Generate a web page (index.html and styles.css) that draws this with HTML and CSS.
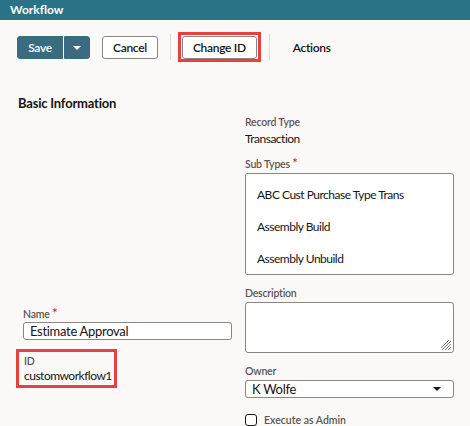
FILE: index.html
```html
<!doctype html>
<html lang="en-US">
<head>
<meta name="viewport" content="width=device-width" />
<meta charset="utf-8" />
<title>Workflow</title>
<link rel="stylesheet" href="styles.css">
</head>
<body>
<div class="header">Workflow</div>

<!-- toolbar: save split button, cancel, change id, actions menu -->
<div class="toolbar">
	<div class="split">
		<button class="btn primary">Save</button>
		<button class="btn primary drop"><span class="caret"></span></button>
	</div>
	<button class="btn">Cancel</button>
	<span class="sep"></span>
	<span class="mark">
		<button class="btn">Change ID</button>
	</span>
	<span class="sep second"></span>
	<button class="btn plain">Actions</button>
</div>

<div class="form">
	<div class="col left">
		<h2>Basic Information</h2>

		<div class="field name">
			<label>Name <span class="req">*</span></label>
			<div class="input">Estimate Approval</div>
		</div>

		<div class="mark idbox">
			<label>ID</label>
			<div class="value">customworkflow1</div>
		</div>
	</div>

	<div class="col right">
		<div class="field">
			<label>Record Type</label>
			<div class="value">Transaction</div>
		</div>

		<div class="field">
			<label>Sub Types <span class="req">*</span></label>
			<ul class="listbox">
				<li>ABC Cust Purchase Type Trans</li>
				<li>Assembly Build</li>
				<li>Assembly Unbuild</li>
			</ul>
		</div>

		<div class="field">
			<label>Description</label>
			<div class="textarea">
				<svg class="grip" width="10" height="10" viewBox="0 0 10 10">
					<path d="M10 1L1 10M10 4L4 10M10 7L7 10M10 -2L-2 10" stroke="#777" stroke-width="1" />
				</svg>
			</div>
		</div>

		<div class="field">
			<label>Owner</label>
			<div class="input select">K Wolfe <span class="caret dark"></span></div>
		</div>

		<div class="check">
			<span class="box"></span>
			<span>Execute as Admin</span>
		</div>
	</div>
</div>
</body>
</html>
```

FILE: styles.css
```css
body {
	margin: 0;
	background-color: #faf9f8;
	color: #161513;
	font-family: Lato, "Noto Sans", sans-serif;
	font-size: 13px;
	overflow: hidden;
}
.header {
	background-color: #2a7386;
	color: #ffffff;
	font-weight: bold;
	font-size: 12px;
	height: 20px;
	line-height: 19px;
	padding-left: 10px;
}
.toolbar {
	display: flex;
	align-items: center;
	padding: 12px 0 0 17px;
	height: 30px;
}
.split {
	display: flex;
	gap: 1px;
	margin-right: 12px;
}
.btn {
	font-family: inherit;
	font-size: 12px;
	font-weight: 600;
	letter-spacing: -0.3px;
	color: #161513;
	background-color: #ffffff;
	border: 1px solid #8a8680;
	border-radius: 3px;
	height: 23px;
	padding: 0 10px;
}
.btn.primary {
	background-color: #3a6b7e;
	border-color: #3a6b7e;
	color: #ffffff;
	width: 46px;
	padding: 0;
	border-radius: 3px 0 0 3px;
}
.btn.drop {
	width: 26px;
	border-radius: 0 3px 3px 0;
}
.caret {
	display: inline-block;
	border-left: 4px solid transparent;
	border-right: 4px solid transparent;
	border-top: 4px solid #ffffff;
	vertical-align: middle;
}
.caret.dark {
	border-top-color: #161513;
	margin-left: auto;
}
.sep {
	width: 1px;
	height: 26px;
	background-color: #dedbd7;
	margin: 0 7px 0 12px;
}
.sep.second {
	margin-left: 8px;
}
.mark {
	border: 3px solid #e8403f;
	padding: 0 1px;
	display: inline-block;
}
.toolbar .mark {
	height: 24px;
	display: flex;
	align-items: center;
}
.btn.plain {
	border-color: transparent;
	background: none;
	margin-left: 5px;
}
.form {
	display: grid;
	grid-template-columns: 216px 209px;
	column-gap: 13px;
	padding-left: 16px;
	margin-top: 19px;
}
.col {
	display: flex;
	flex-direction: column;
}
h2 {
	font-size: 13px;
	font-weight: bold;
	letter-spacing: -0.2px;
	margin: 14px 0 0 2px;
}
label {
	display: block;
	font-size: 10.5px;
	color: #5b5652;
	font-weight: 600;
	letter-spacing: -0.2px;
	margin-bottom: 3px;
}
.req {
	color: #c0362c;
	font-size: 13px;
	line-height: 8px;
}
.value {
	font-size: 12px;
	letter-spacing: -0.5px;
}
.right .field {
	margin-bottom: 12px;
}
.right .field:first-child {
	margin-top: 35px;
}
.input {
	height: 16px;
	line-height: 16px;
	background-color: #ffffff;
	border: 1px solid #8a8680;
	border-radius: 3px;
	padding: 0 6px;
	font-size: 13px;
	letter-spacing: -0.3px;
}
.select {
	display: flex;
	align-items: center;
	padding-right: 12px;
}
.listbox {
	list-style-type: none;
	margin: 0;
	padding: 13px 0 0 11px;
	height: 87px;
	overflow: hidden;
	background-color: #ffffff;
	border: 1px solid #8a8680;
	border-radius: 3px;
	font-size: 12px;
	letter-spacing: -0.5px;
}
.listbox li {
	height: 32px;
}
.textarea {
	position: relative;
	height: 49px;
	background-color: #ffffff;
	border: 1px solid #8a8680;
	border-radius: 3px;
}
.grip {
	position: absolute;
	right: 2px;
	bottom: 2px;
}
.left .name {
	margin-top: 197px;
	margin-left: 7px;
}
.left .name label {
	margin-bottom: 2px;
}
.idbox {
	margin-top: 9px;
	width: 90px;
	padding: 3px 0 2px 5px;
	align-self: flex-start;
}
.idbox label {
	margin-bottom: 1px;
}
.check {
	display: flex;
	align-items: center;
	gap: 7px;
	margin-top: 4px;
	font-size: 10.5px;
	font-weight: 600;
	color: #5b5652;
}
.box {
	width: 10px;
	height: 10px;
	border: 1px solid #161513;
	border-radius: 3px;
	background-color: #ffffff;
}
```
